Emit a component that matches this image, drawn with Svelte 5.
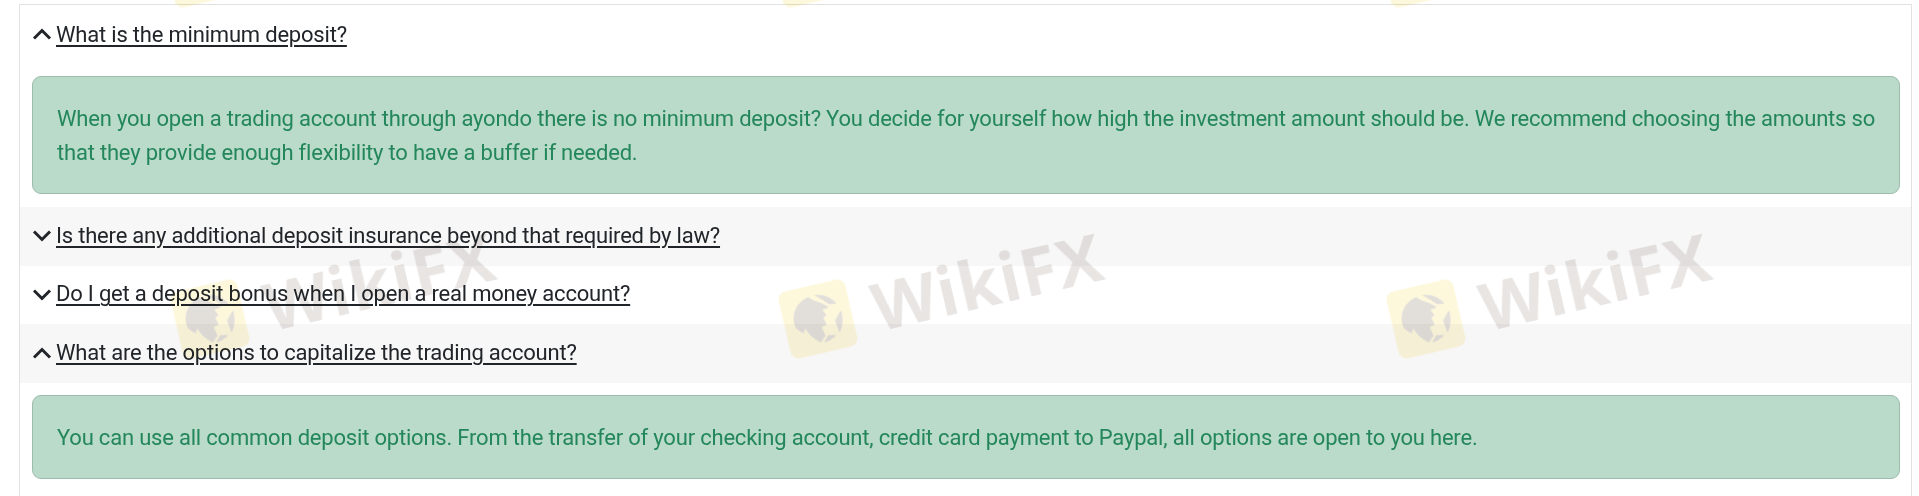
<script lang="ts">
    const items = [
        {
            q: 'What is the minimum deposit?',
            a: 'When you open a trading account through ayondo there is no minimum deposit? You decide for yourself how high the investment amount should be. We recommend choosing the amounts so that they provide enough flexibility to have a buffer if needed.',
            open: true,
        },
        { q: 'Is there any additional deposit insurance beyond that required by law?', open: false },
        { q: 'Do I get a deposit bonus when I open a real money account?', open: false },
        {
            q: 'What are the options to capitalize the trading account?',
            a: 'You can use all common deposit options. From the transfer of your checking account, credit card payment to Paypal, all options are open to you here.',
            open: true,
        },
    ]

    // watermark tiles, the top row only peeks in with the bottom of the logo
    const marks = [
        { x: 174, y: 283, text: true },
        { x: 782, y: 283, text: true },
        { x: 1390, y: 283, text: true },
        { x: 166, y: -68, text: false },
        { x: 774, y: -68, text: false },
        { x: 1382, y: -68, text: false },
    ]
</script>

<div class="page">
    <div class="card">
        {#each items as item, i}
            <div class="row" class:stripe={i % 2 === 1}>
                <svg class="chevron" class:up={item.open} viewBox="0 0 20 13" width="20" height="13">
                    <path d="M2 2.5 L10 10.5 L18 2.5" />
                </svg>
                <a href="#top" class="question">{item.q}</a>
            </div>
            {#if item.a}
                <div class="alert">{item.a}</div>
            {/if}
        {/each}
    </div>

    {#each marks as m}
        <div class="mark" style={`left: ${m.x}px; top: ${m.y}px;`}>
            <svg class="logo" viewBox="0 0 80 80" width="72" height="72">
                <rect x="2" y="2" width="76" height="76" rx="9" fill="#fdf7dc" />
                <path
                    d="M13 40 C13 27 22 16 35 14 L40 19 L48 24 L55 30 L47 31 L50 38 L46 40 L48 48 L42 50 L44 60 L37 66 C30 60 26 54 24 47 L21 52 C16 48 13 44 13 40 Z"
                    fill="#e2dfdb"
                />
                <path d="M42 13 C52 14 60 20 64 28 L56 27 Z" fill="#e2dfdb" />
                <path d="M67 36 C68 46 65 54 60 60 L58 46 Z" fill="#e2dfdb" />
                <path d="M56 62 C52 65 47 67 41 67 L47 60 Z" fill="#e2dfdb" />
            </svg>
            {#if m.text}
                <span class="mark-text">WikiFX</span>
            {/if}
        </div>
    {/each}
</div>

<style>
    :global(body) {
        background: #fff;
        overflow: hidden;
    }
    .page {
        position: relative;
        height: 496px;
        overflow: hidden;
        padding: 4px 7px 0 19px;
        box-sizing: border-box;
        font-family: Roboto, 'Liberation Sans', sans-serif;
    }
    .card {
        height: 100%;
        box-sizing: border-box;
        border: 1px solid #e2e2e2;
        border-bottom: 0;
        background: #fff;
    }
    .row {
        display: flex;
        align-items: center;
        gap: 4px;
        height: 58.6px;
        padding: 0 0 1px 12px;
        box-sizing: border-box;
    }
    .row:first-child {
        padding: 1px 0 0 12px;
    }
    .stripe {
        background: #f7f7f7;
    }
    .chevron {
        flex: none;
        fill: none;
        stroke: #212529;
        stroke-width: 3;
    }
    .chevron.up {
        transform: scaleY(-1);
    }
    .question {
        font-size: 22px;
        line-height: 34px;
        color: #212529;
        text-decoration: underline;
        text-decoration-thickness: 2px;
        text-underline-offset: 3px;
        letter-spacing: -0.2px;
    }
    .alert {
        margin: 12.5px 11px 13px 12px;
        padding: 25px 20px 23px 24px;
        border: 1px solid #9dbcad;
        border-radius: 9px;
        background: #badaca;
        color: #23875b;
        font-size: 22px;
        line-height: 34px;
        letter-spacing: -0.2px;
    }
    .mark {
        position: absolute;
        display: flex;
        align-items: center;
        gap: 20px;
        transform: rotate(-13deg);
        transform-origin: 36px 36px;
        pointer-events: none;
        mix-blend-mode: multiply;
        filter: blur(0.6px);
    }
    .mark-text {
        font-family: 'Open Sans', Roboto, sans-serif;
        font-weight: 700;
        font-size: 67px;
        line-height: 72px;
        letter-spacing: 1px;
        color: #e8e5e3;
    }
</style>
